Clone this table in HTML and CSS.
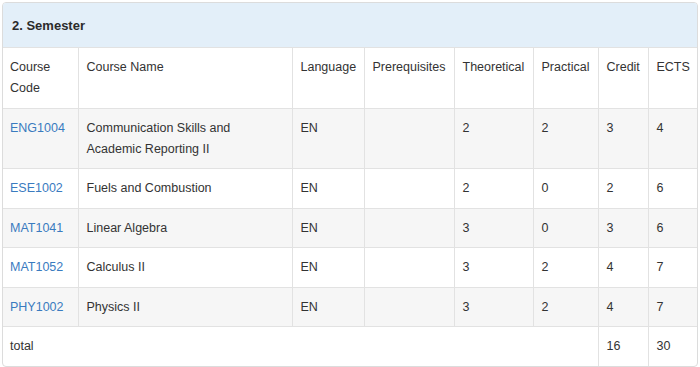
FILE: index.html
```html
<!DOCTYPE html>
<html>
<head>
<meta charset="utf-8">
<link rel="stylesheet" href="styles.css">
</head>
<body>
<div class="panel">
  <div class="panel-heading">2. Semester</div>
  <table class="courses">
    <colgroup>
      <col class="c-code"><col class="c-name"><col class="c-lang"><col class="c-pre">
      <col class="c-theo"><col class="c-prac"><col class="c-cred"><col class="c-ects">
    </colgroup>
    <thead>
      <tr>
        <th>Course Code</th><th>Course Name</th><th>Language</th><th>Prerequisites</th>
        <th>Theoretical</th><th>Practical</th><th>Credit</th><th>ECTS</th>
      </tr>
    </thead>
    <tbody>
      <tr class="odd">
        <td><a href="#">ENG1004</a></td><td>Communication Skills and Academic Reporting II</td><td>EN</td><td></td>
        <td>2</td><td>2</td><td>3</td><td>4</td>
      </tr>
      <tr>
        <td><a href="#">ESE1002</a></td><td>Fuels and Combustion</td><td>EN</td><td></td>
        <td>2</td><td>0</td><td>2</td><td>6</td>
      </tr>
      <tr class="odd">
        <td><a href="#">MAT1041</a></td><td>Linear Algebra</td><td>EN</td><td></td>
        <td>3</td><td>0</td><td>3</td><td>6</td>
      </tr>
      <tr>
        <td><a href="#">MAT1052</a></td><td>Calculus II</td><td>EN</td><td></td>
        <td>3</td><td>2</td><td>4</td><td>7</td>
      </tr>
      <tr class="odd">
        <td><a href="#">PHY1002</a></td><td>Physics II</td><td>EN</td><td></td>
        <td>3</td><td>2</td><td>4</td><td>7</td>
      </tr>
      <tr>
        <td colspan="6">total</td><td>16</td><td>30</td>
      </tr>
    </tbody>
  </table>
</div>
</body>
</html>
```

FILE: styles.css
```css
html, body {
  margin: 0;
  padding: 0;
  background: #fff;
}
body {
  padding: 2px;
  font-family: "Liberation Sans", Arial, Helvetica, sans-serif;
  font-size: 12.5px;
  color: #333;
}
.panel {
  width: 694px;
  border: 1px solid #dcdcdc;
  border-radius: 4px;
  overflow: hidden;
  background: #fff;
}
.panel-heading {
  background: #e3eff9;
  font-weight: bold;
  font-size: 13px;
  line-height: 20px;
  padding: 13px 9px 11px 9px;
  color: #2b2b2b;
}
.courses {
  width: 100%;
  border-collapse: collapse;
  table-layout: fixed;
}
.c-code { width: 75px; }
.c-name { width: 214px; }
.c-lang { width: 72px; }
.c-pre { width: 90px; }
.c-theo { width: 79px; }
.c-prac { width: 65px; }
.c-cred { width: 50px; }
.c-ects { width: 49px; }
.courses th,
.courses td {
  text-align: left;
  font-weight: normal;
  vertical-align: top;
  padding: 9px 6px 8.5px 8px;
  line-height: 21px;
  border: 1px solid #e2e2e2;
}
.courses tr > :first-child { border-left: 0; padding-left: 7px; }
.courses tr > :last-child { border-right: 0; }
.courses tbody tr:last-child > * { border-bottom: 0; }
.courses tr.odd td { background: #f6f6f6; }
.courses a {
  color: #3a7bbf;
  text-decoration: none;
}
```
